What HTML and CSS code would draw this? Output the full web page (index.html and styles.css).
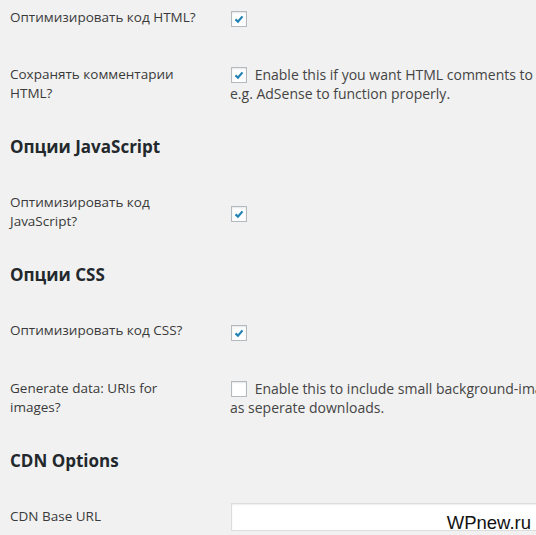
FILE: index.html
```html
<!DOCTYPE html>
<html lang="ru">
<head>
    <meta charset="UTF-8">
    <meta name="viewport" content="width=device-width, initial-scale=1.0">
    <title>Autoptimize</title>
    <link rel="stylesheet" href="styles.css">
</head>
<body>
    <div class="wrap">
        <table class="form-table">
            <tr>
                <th>Оптимизировать код HTML?</th>
                <td><span class="checkbox checked"><svg viewBox="0 0 16 16"><polyline points="4,8.5 6.8,11 12,5"/></svg></span></td>
            </tr>
            <tr>
                <th>Сохранять комментарии<br>HTML?</th>
                <td class="with-desc">
                    <span class="checkbox checked"><svg viewBox="0 0 16 16"><polyline points="4,8.5 6.8,11 12,5"/></svg></span>
                    Enable this if you want HTML comments to remain in the page, needed for<br>e.g. AdSense to function properly.
                </td>
            </tr>
        </table>

        <h2>Опции JavaScript</h2>
        <table class="form-table">
            <tr>
                <th>Оптимизировать код<br>JavaScript?</th>
                <td><span class="checkbox checked"><svg viewBox="0 0 16 16"><polyline points="4,8.5 6.8,11 12,5"/></svg></span></td>
            </tr>
        </table>

        <h2>Опции CSS</h2>
        <table class="form-table">
            <tr>
                <th>Оптимизировать код CSS?</th>
                <td><span class="checkbox checked"><svg viewBox="0 0 16 16"><polyline points="4,8.5 6.8,11 12,5"/></svg></span></td>
            </tr>
            <tr>
                <th>Generate data: URIs for<br>images?</th>
                <td class="with-desc">
                    <span class="checkbox"></span>
                    Enable this to include small background-images in the CSS-file as data: URIs rather than<br>as seperate downloads.
                </td>
            </tr>
        </table>

        <h2>CDN Options</h2>
        <table class="form-table">
            <tr>
                <th>CDN Base URL</th>
                <td class="with-input"><input type="text" class="regular-text"></td>
            </tr>
        </table>
    </div>
    <div class="watermark">WPnew.ru</div>
</body>
</html>
```

FILE: styles.css
```css
html, body {
    overflow: hidden;
}
body {
    margin: 0;
    background-color: #f1f1f1;
    color: #444;
    font-family: "Open Sans", "Noto Sans", sans-serif;
    font-size: 14px;
    line-height: 19px;
    width: 536px;
    height: 535px;
    position: relative;
}
.wrap {
    margin-top: -11px;
    padding-left: 10px;
    width: 900px;
}
.form-table {
    border-collapse: collapse;
    border-spacing: 0;
}
.form-table th {
    width: 200px;
    padding: 19px 10px 19px 0;
    text-align: left;
    vertical-align: top;
    font-size: 13.5px;
    font-weight: normal;
    color: #3a3a3a;
}
.form-table td {
    padding: 19px 10px;
    vertical-align: middle;
    white-space: nowrap;
}
.form-table td.with-desc {
    vertical-align: top;
}
.form-table td.with-input {
    padding-top: 15px;
    vertical-align: top;
}
h2 {
    margin: 13px 0 15px;
    font-size: 17px;
    line-height: 24px;
    font-weight: 700;
    color: #23282d;
}
.checkbox {
    display: inline-block;
    width: 16px;
    height: 16px;
    box-sizing: border-box;
    border: 1px solid #b4b9be;
    background-color: #fff;
    box-shadow: inset 0 1px 2px rgba(0, 0, 0, 0.1);
    vertical-align: -3px;
    margin: 0 4px 0 1px;
}
.checkbox svg {
    display: block;
    width: 14px;
    height: 14px;
    fill: none;
    stroke: #2383b5;
    stroke-width: 2.6;
}
.form-table td > .checkbox:only-child {
    vertical-align: middle;
}
.regular-text {
    display: block;
    margin: 0 0 0 1px;
    width: 350px;
    height: 28px;
    box-sizing: border-box;
    border: 1px solid #ddd;
    background-color: #fff;
    box-shadow: inset 0 1px 2px rgba(0, 0, 0, 0.07);
    font-family: inherit;
    font-size: 14px;
}
.watermark {
    position: absolute;
    right: 5px;
    bottom: 3px;
    font-family: "Liberation Sans", Arial, sans-serif;
    font-size: 18.5px;
    color: #111;
}
```
